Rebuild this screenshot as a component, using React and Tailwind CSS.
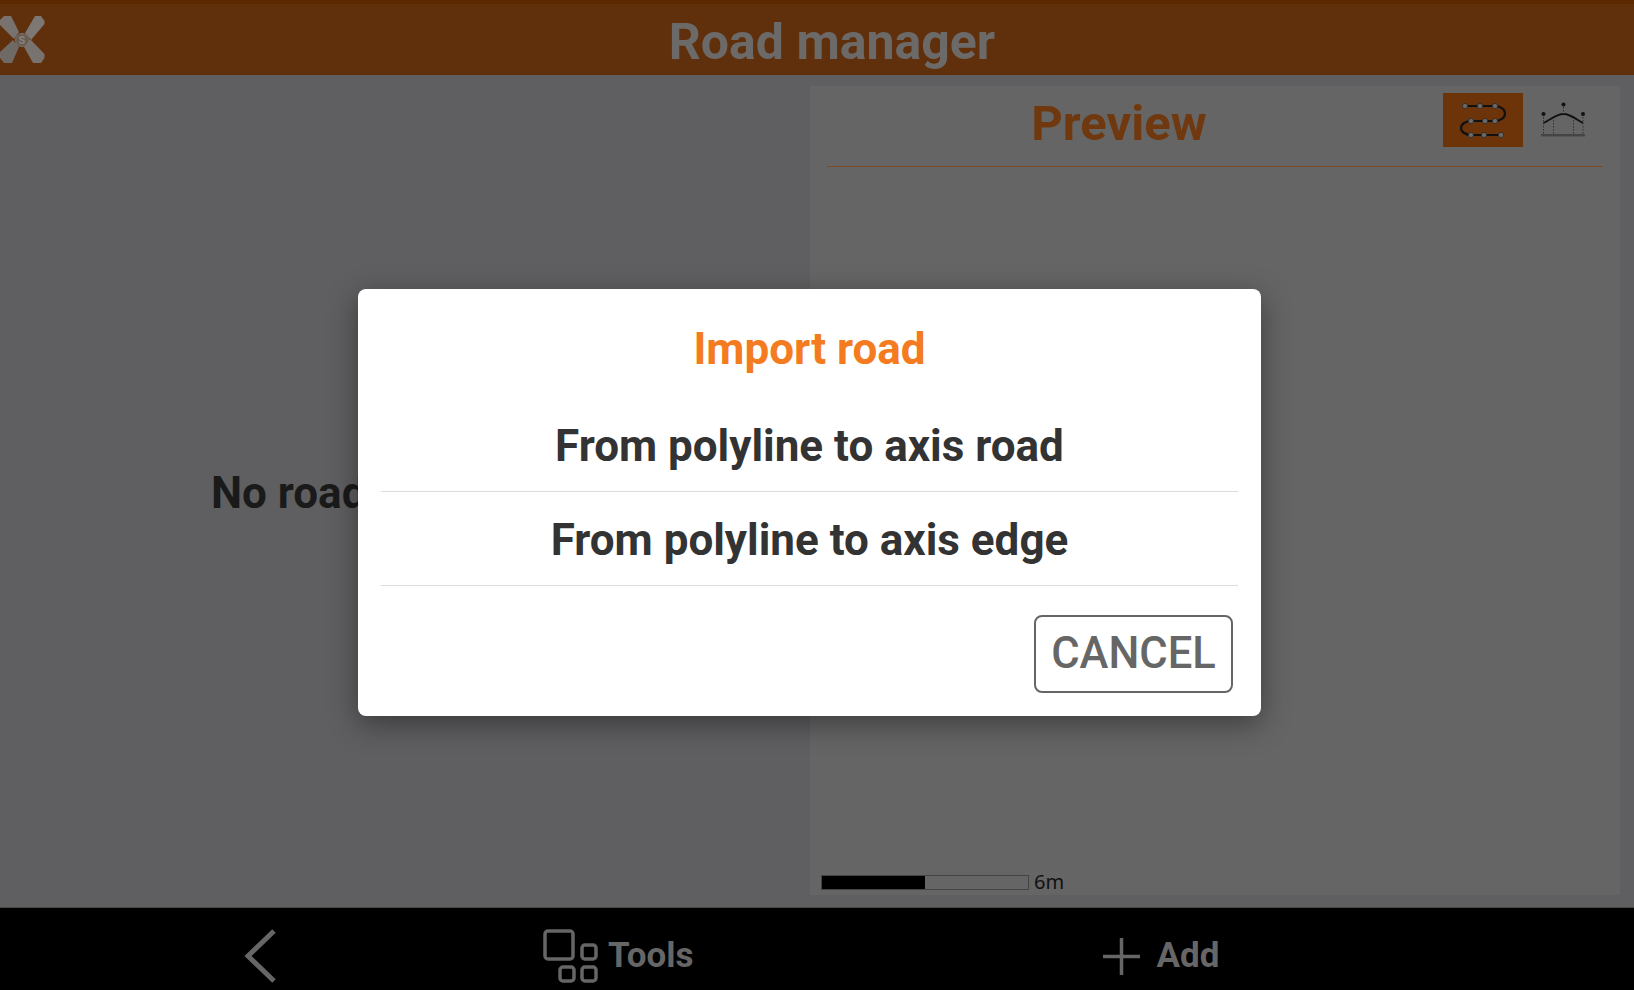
import React from "react";

function Logo() {
  return (
    <svg width="46" height="48" viewBox="0 0 46 48" className="shrink-0">
      <polygon points="0,4 4,0 11,0 19,16 14,23 0,9" fill="#78736f" />
      <polygon points="0,36 13,24 19,31 12,47 4,47 0,42" fill="#6f6a66" />
      <polygon points="25,17 35,0 41,0 44.5,5 44.5,8 31,24" fill="#7d7874" />
      <polygon points="24,31 30,23 44.5,38 44.5,42 41,47 33,47" fill="#78736f" />
      <circle cx="22" cy="24" r="6.5" fill="#665c54" stroke="#7a736d" strokeWidth="1" />
      <text x="22" y="28" textAnchor="middle" fontSize="11" fontWeight="700" fill="#8a837d" fontFamily="Roboto, sans-serif">S</text>
    </svg>
  );
}

function RoadIcon() {
  const dots = [
    [22, 13], [37, 13], [52, 13],
    [28, 28], [42, 28], [52, 28],
    [28, 42], [41, 42], [58, 42],
  ];
  return (
    <svg width="80" height="54" viewBox="0 0 80 54" className="block">
      <path
        d="M22 13H52C57 13 62 16 62 20.5S57 28 52 28H28C23 28 18 31 18 35S23 42 28 42H58"
        fill="none"
        stroke="#111"
        strokeWidth="2.2"
      />
      {dots.map(([x, y]) => (
        <circle key={`${x}-${y}`} cx={x} cy={y} r="2.6" fill="#6a6a6a" stroke="#2a2a2a" strokeWidth="0.8" />
      ))}
    </svg>
  );
}

function SectionIcon() {
  return (
    <svg width="48" height="38" viewBox="0 0 48 38" className="block">
      <path d="M3.5 21C10 18 16 12 23.5 12S37 18 43 21" fill="none" stroke="#111" strokeWidth="1.8" />
      <g stroke="#333" strokeWidth="1" strokeDasharray="1.5 1.5">
        <path d="M3.5 12V33M13.5 18V33M33.5 18V33M43 12V33M23.5 2V12" />
      </g>
      <circle cx="23.5" cy="2.5" r="2" fill="#111" />
      <circle cx="3.5" cy="12" r="2" fill="#111" />
      <circle cx="43" cy="12" r="2" fill="#111" />
      <rect x="1" y="32" width="44" height="2.4" fill="#444" />
    </svg>
  );
}

function ToolsIcon() {
  return (
    <svg width="55" height="54" viewBox="0 0 55 54" fill="none" stroke="#666" strokeWidth="3.5">
      <rect x="2" y="2" width="28" height="28" rx="3" />
      <rect x="39" y="16" width="14" height="14" rx="3" />
      <rect x="17" y="38" width="14" height="14" rx="3" />
      <rect x="39" y="38" width="14" height="14" rx="3" />
    </svg>
  );
}

export default function App() {
  return (
    <div className="relative flex h-[990px] w-[1634px] flex-col overflow-hidden bg-[#5f5f61] font-['Roboto',sans-serif]">
      {/* top bar */}
      <header className="flex h-[75px] shrink-0 items-center border-t-4 border-[#5c2800] bg-[#602f0c]">
        <div className="flex w-[46px] items-center">
          <Logo />
        </div>
        <h1 className="flex-1 pr-[16px] pt-[6px] text-center text-[50px] font-bold text-[#6c6a68]">Road manager</h1>
      </header>

      <main className="flex flex-1">
        <section className="flex w-[810px] shrink-0 items-center pl-[211px] pt-[4px]">
          <p className="text-[44px] font-bold text-[#1a1a1a]">No road</p>
        </section>

        <section className="mb-[12px] mr-[14px] mt-[11px] flex flex-1 flex-col bg-[#656565]">
          <div className="mx-[17px] flex h-[81px] items-start border-b border-[#7d4a25]">
            <h2 className="flex-1 pr-[30px] pt-[1px] text-center text-[49px] font-bold text-[#70380e]">Preview</h2>
            <div className="flex items-start gap-[17px] pt-[7px]">
              <div className="ml-[2px] bg-[#6e3409]">
                <RoadIcon />
              </div>
              <div className="mr-[15px] pt-[9px]">
                <SectionIcon />
              </div>
            </div>
          </div>
          <div className="flex-1" />
          <div className="mb-[4px] ml-[11px] flex items-center gap-[5px]">
            <div className="flex h-[15px] w-[208px] border border-[#444]">
              <div className="w-1/2 bg-black" />
            </div>
            <span className="font-['Noto_Sans',sans-serif] text-[20px] leading-[18px] text-[#111]">6m</span>
          </div>
        </section>
      </main>

      {/* bottom bar */}
      <footer className="flex h-[83px] shrink-0 items-center border-t border-[#4a4a4a] bg-black pt-[14px] text-[#666]">
        <svg width="34" height="56" viewBox="0 0 34 56" fill="none" stroke="#666" strokeWidth="5" className="ml-[244px]">
          <path d="M30 3L4 28L30 53" />
        </svg>
        <div className="ml-[265px] flex items-center gap-[10px]">
          <ToolsIcon />
          <span className="text-[35px] font-bold">Tools</span>
        </div>
        <div className="ml-[409px] flex items-center gap-[17px]">
          <svg width="37" height="37" viewBox="0 0 37 37" stroke="#666" strokeWidth="3.5">
            <path d="M18.5 0V37M0 18.5H37" />
          </svg>
          <span className="text-[35px] font-bold">Add</span>
        </div>
      </footer>

      {/* import dialog */}
      <div className="absolute inset-0 flex items-start justify-start pl-[358px] pt-[289px]">
        <div className="flex h-[427px] w-[903px] flex-col rounded-[8px] bg-white px-[23px] shadow-[0_8px_30px_rgba(0,0,0,0.4)]">
          <h3 className="mt-[34px] h-[52px] text-center text-[44px] font-bold leading-[52px] text-[#f47b20]">Import road</h3>
          <button className="mt-[34px] h-[83px] border-b border-[#dcdcdc] pb-[8px] text-[44px] font-bold text-[#333]">From polyline to axis road</button>
          <button className="mt-[10px] h-[84px] border-b border-[#dcdcdc] pb-[8px] text-[44px] font-bold text-[#333]">From polyline to axis edge</button>
          <div className="mt-[29px] flex justify-end pr-[5px]">
            <button className="h-[78px] w-[199px] rounded-[8px] border-2 border-[#666] text-[43.5px] font-medium text-[#666]">CANCEL</button>
          </div>
        </div>
      </div>
    </div>
  );
}
